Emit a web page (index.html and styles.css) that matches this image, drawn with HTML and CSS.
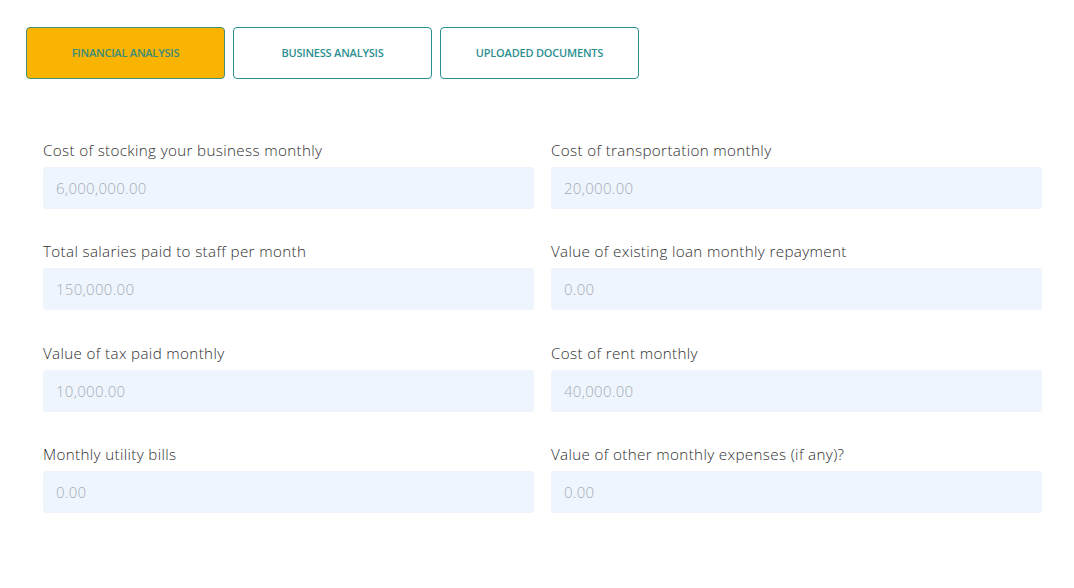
FILE: index.html
```html
<!DOCTYPE html>
<html lang="en">
<head>
<meta charset="utf-8">
<title>Financial Analysis</title>
<link rel="stylesheet" href="styles.css">
</head>
<body>
<div class="page">
  <nav class="tabs">
    <button class="tab tab-active">FINANCIAL ANALYSIS</button>
    <button class="tab">BUSINESS ANALYSIS</button>
    <button class="tab">UPLOADED DOCUMENTS</button>
  </nav>
  <form class="grid">
    <div class="field">
      <label class="label">Cost of stocking your business monthly</label>
      <input class="input" placeholder="6,000,000.00">
    </div>
    <div class="field">
      <label class="label">Cost of transportation monthly</label>
      <input class="input" placeholder="20,000.00">
    </div>
    <div class="field">
      <label class="label">Total salaries paid to staff per month</label>
      <input class="input" placeholder="150,000.00">
    </div>
    <div class="field">
      <label class="label">Value of existing loan monthly repayment</label>
      <input class="input" placeholder="0.00">
    </div>
    <div class="field">
      <label class="label">Value of tax paid monthly</label>
      <input class="input" placeholder="10,000.00">
    </div>
    <div class="field">
      <label class="label">Cost of rent monthly</label>
      <input class="input" placeholder="40,000.00">
    </div>
    <div class="field">
      <label class="label">Monthly utility bills</label>
      <input class="input" placeholder="0.00">
    </div>
    <div class="field">
      <label class="label">Value of other monthly expenses (if any)?</label>
      <input class="input" placeholder="0.00">
    </div>
  </form>
</div>
</body>
</html>
```
FILE: styles.css
```css
* { box-sizing: border-box; }
html, body { margin: 0; padding: 0; background: #ffffff; }
body { font-family: "Open Sans", "Liberation Sans", sans-serif; color: #333; }
.page { padding: 27px 32px 0 26px; }
.tabs { display: flex; gap: 8px; }
.tab {
  width: 199px; height: 52px;
  border: 1.5px solid #2b8f91; border-radius: 4px;
  background: #fff; color: #2b8f91;
  font-family: "Open Sans", "Liberation Sans", sans-serif;
  font-size: 11px; font-weight: 600; letter-spacing: -0.2px;
  padding: 0 0 2px; cursor: pointer;
}
.tab-active { background: #f8b400; color: #3b8c7c; border-color: #3f8f7c; }
.grid {
  display: grid; grid-template-columns: 491px 491px; column-gap: 17px; row-gap: 32.4px;
  padding: 61px 0 0 17px;
}
.field { display: flex; flex-direction: column; }
.label { font-size: 15.2px; font-weight: 300; color: #2f2f2f; line-height: 21px; margin-bottom: 6px; letter-spacing: 0.35px; }
.input {
  height: 42px; border: none; border-radius: 3px; background: #eef5fd;
  padding: 0 13px; font-family: inherit; font-size: 15px; font-weight: 300; color: #333;
  letter-spacing: 0.3px;
}
.input::placeholder { color: #a5acb7; }
```
